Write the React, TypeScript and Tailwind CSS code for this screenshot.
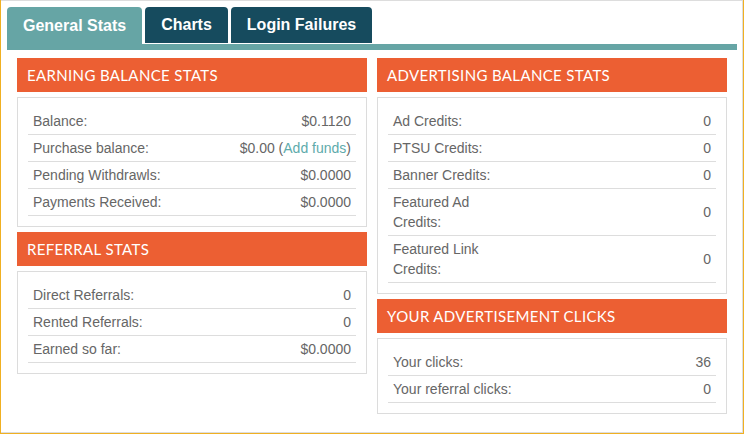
import React from "react";

type Row = { label: string; value: React.ReactNode };

function Section({ title, rows, labelClass = "" }: { title: string; rows: Row[]; labelClass?: string }) {
  return (
    <div className="mb-[5px]">
      <div className="h-[34px] bg-[#ec5f33] pl-[10px] flex items-center text-white text-[15px] uppercase tracking-[0.35px] font-['Lato',sans-serif] mb-[5px]">
        {title}
      </div>
      <div className="border border-[#dcdcdc] p-[10px]">
        {rows.map((r, i) => (
          <div
            key={i}
            className="flex items-center justify-between px-[5px] py-[3px] leading-[20px] border-b border-[#dddddd] text-[14px] text-[#666666]"
          >
            <span className={labelClass}>{r.label}</span>
            <span className="text-right">{r.value}</span>
          </div>
        ))}
      </div>
    </div>
  );
}

export default function App() {
  return (
    <div className="w-[744px] h-[434px] bg-white border-l border-r border-b border-[#f0b022] font-['Liberation_Sans',Arial,sans-serif]">
      <div className="h-full border-t border-r border-b border-[#dddddd] pl-[6px] pr-[5px] pt-[6px]">
        <div className="flex gap-[3px]">
          <div className="h-[37px] px-4 rounded-t-[4px] bg-[#66a5a5] text-white font-bold text-[16px] flex items-center">
            General Stats
          </div>
          <div className="h-[37px] px-4 rounded-t-[4px] bg-[#164b5e] text-white font-bold text-[16px] flex items-center border-b border-white">
            Charts
          </div>
          <div className="h-[37px] px-4 rounded-t-[4px] bg-[#164b5e] text-white font-bold text-[16px] flex items-center border-b border-white">
            Login Failures
          </div>
        </div>
        <div className="h-[6px] bg-[#66a5a5]" />
        <div className="flex gap-[10px] px-[10px] pt-[8px]">
          <div className="w-[350px]">
            <Section
              title="Earning Balance Stats"
              rows={[
                { label: "Balance:", value: "$0.1120" },
                {
                  label: "Purchase balance:",
                  value: (
                    <>
                      $0.00 (<span className="text-[#5eabab]">Add funds</span>)
                    </>
                  ),
                },
                { label: "Pending Withdrawls:", value: "$0.0000" },
                { label: "Payments Received:", value: "$0.0000" },
              ]}
            />
            <Section
              title="Referral Stats"
              rows={[
                { label: "Direct Referrals:", value: "0" },
                { label: "Rented Referrals:", value: "0" },
                { label: "Earned so far:", value: "$0.0000" },
              ]}
            />
          </div>
          <div className="w-[350px]">
            <Section
              title="Advertising Balance Stats"
              labelClass="max-w-[110px]"
              rows={[
                { label: "Ad Credits:", value: "0" },
                { label: "PTSU Credits:", value: "0" },
                { label: "Banner Credits:", value: "0" },
                { label: "Featured Ad Credits:", value: "0" },
                { label: "Featured Link Credits:", value: "0" },
              ]}
            />
            <Section
              title="Your Advertisement Clicks"
              rows={[
                { label: "Your clicks:", value: "36" },
                { label: "Your referral clicks:", value: "0" },
              ]}
            />
          </div>
        </div>
      </div>
    </div>
  );
}
